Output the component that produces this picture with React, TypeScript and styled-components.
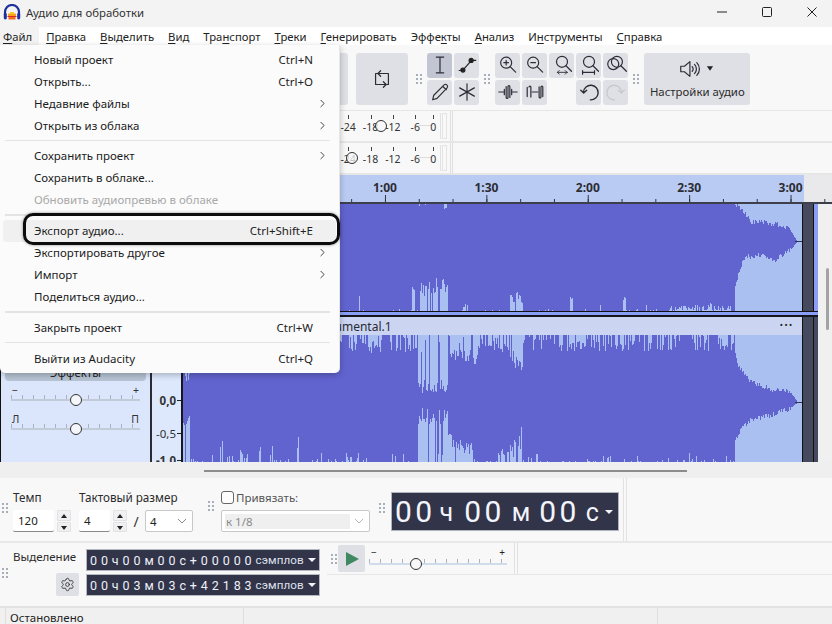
import React from "react";
import styled, { createGlobalStyle } from "styled-components";
import { ChevronRight, Settings } from "lucide-react";

const Global = createGlobalStyle`
  html, body { margin: 0; padding: 0; background: #f8f8f8; overflow: hidden; }
  #root { width: 832px; height: 624px; }
  * { box-sizing: border-box; }
`;

const FONT = `"Noto Sans", "Open Sans", "Liberation Sans", sans-serif`;

const Page = styled.div`
  position: relative; width: 832px; height: 624px; overflow: hidden;
  display: flex; flex-direction: column; font-family: ${FONT}; font-size: 11.5px; color: #1f1f1f;
  background: #f8f8f8;
`;

/* ---------- title + menu ---------- */
const TitleBar = styled.div`
  height: 27px; flex: none; display: flex; align-items: center; background: #f3f3f3; padding: 0 0 3px 3px;
`;
const TitleText = styled.span`
  margin-left: 5px; font-size: 11.4px; color: #333;
`;
const WinControls = styled.div`
  margin-left: auto; display: flex; align-items: center; padding-right: 14px; gap: 33px; height: 100%;
`;
const MenuBar = styled.div`
  height: 18px; flex: none; display: flex; background: #fff; align-items: flex-start;
`;
const MenuEntry = styled.span<{ $active?: boolean }>`
  padding: 1px 7px 0 ${(p) => (p.$active ? "3px" : "7px")};
  height: 18px; line-height: 18px; font-size: 11.3px; color: #222;
  background: ${(p) => (p.$active ? "#f3f3f3" : "transparent")};
  u { text-underline-offset: 2px; }
`;

/* ---------- toolbar ---------- */
const Toolbar = styled.div`
  height: 66px; flex: none; display: flex; align-items: center; padding: 2px 0 0 296px;
  background: #f8f8f8; border-bottom: 1px solid #e6e6e6;
`;
const Grip = styled.div<{ $ml?: number; $mr?: number }>`
  width: 8px; height: 12px; flex: none; margin: 0 ${(p) => p.$mr ?? 0}px 0 ${(p) => p.$ml ?? 0}px;
  background-image: radial-gradient(circle, #a9aebb 1px, transparent 1.3px);
  background-size: 4px 4px;
`;
const BigButton = styled.div`
  width: 52px; height: 52px; border-radius: 3px; background: #dfe0e5; flex: none;
  display: flex; align-items: center; justify-content: center;
`;
const SecondBigButton = styled(BigButton)`
  margin-left: 8px;
`;
const ToolGrid = styled.div<{ $cols: number }>`
  display: grid; grid-template-columns: repeat(${(p) => p.$cols}, 25.2px); grid-auto-rows: 25px; gap: 2px 1.8px;
`;
const ToolButton = styled.div<{ $active?: boolean; $none?: boolean }>`
  border-radius: 3px; display: flex; align-items: center; justify-content: center;
  background: ${(p) => (p.$none ? "transparent" : p.$active ? "#c2c5d2" : "#dfe0e5")};
`;
const AudioButton = styled.div`
  width: 106px; height: 52px; border-radius: 3px; background: #dfe0e5; flex: none;
  display: flex; flex-direction: column; align-items: center; padding-top: 5px;
`;
const AudioTop = styled.div`
  display: flex; align-items: center; gap: 5px; height: 22px; margin-left: -4px;
`;
const AudioCaption = styled.span`
  font-size: 11.4px; color: #2b2b2b; margin-top: 4px; white-space: nowrap;
`;

/* ---------- meters ---------- */
const MeterRow = styled.div`
  height: 32px; flex: none; display: flex; align-items: stretch; padding-left: 337px;
  border-bottom: 2px solid #e6e6e6; background: #f8f8f8;
`;
const MeterScale = styled.div`
  position: relative; display: flex; width: 104px; align-items: center;
  border-right: 1px solid #e2e2e2; margin: 2px 0;
  &::before { content: ""; position: absolute; left: 78px; right: 8px; top: 12px; border-top: 1px solid #dcdcdc; }
`;
const MeterLabel = styled.span<{ $w?: number }>`
  position: relative; width: ${(p) => p.$w ?? 23}px; text-align: center; font-size: 10.5px; color: #333; line-height: 14px;
  padding-top: 1px;
  &::before { content: ""; position: absolute; left: 50%; top: -4px; height: 4px; border-left: 1px solid #444; }
`;
const MeterHandle = styled.div<{ $left: number }>`
  position: absolute; top: 7px; left: ${(p) => p.$left}px; width: 12px; height: 12px; border-radius: 50%;
  border: 1.4px solid #333; background: rgba(248, 248, 248, 0.75);
`;
const MeterSide = styled.div`
  width: 5px; margin: 2px 3px 2px 1px; border: 1px solid #e4e4e4;
`;
const VLine = styled.div`
  width: 3px; border-left: 1px solid #dfdfdf; border-right: 1px solid #dfdfdf; flex: none;
`;

/* ---------- ruler ---------- */
const Ruler = styled.div`
  position: relative; height: 29px; flex: none; display: flex; align-items: flex-start; padding: 4px 0 0 334.3px;
  background: linear-gradient(to right, #b9cbf2 804px, #e9e9ec 804px);
  border-bottom: 2px solid #3d3f4c;
  &::after {
    content: ""; position: absolute; left: 0; right: 0; bottom: 0; height: 7px;
    background-image:
      linear-gradient(90deg, #30323c 1px, transparent 1px),
      linear-gradient(90deg, #30323c 1px, transparent 1px);
    background-repeat: repeat-x, repeat-x;
    background-size: 33.8px 3px, 101.4px 7px;
    background-position: 13.2px bottom, 80.8px bottom;
  }
`;
const RulerLabel = styled.span`
  width: 101.4px; text-align: center; font-size: 12px; font-weight: 700; color: #2c2c34; line-height: 18px; flex: none;
`;

/* ---------- tracks ---------- */
const TrackArea = styled.div`
  height: 258px; flex: none; display: flex; background: #f0f0f0;
`;
const TrackColumn = styled.div`
  width: 818px; flex: none; display: flex; flex-direction: column;
`;
const Gutter = styled.div`
  width: 14px; flex: none; padding: 64px 0 0 8px; background: #f0f0f0;
`;
const Thumb = styled.div`
  width: 3px; height: 62px; background: #a3a3a3; border-radius: 2px;
`;
const TrackRow = styled.div<{ $h: number }>`
  height: ${(p) => p.$h}px; flex: none; display: flex;
`;
const FirstTrackRow = styled(TrackRow)`
  border-bottom: 1px solid #111;
`;
const TrackSelect = styled.div`
  height: 3px; flex: none; background: #8a9ef5;
`;
const SecondTrackRow = styled(TrackRow)`
  border-top: 2px solid #15161c;
`;
const Panel = styled.div`
  width: 150px; flex: none; background: #dbe6fd; border-left: 1px solid #111;
  display: flex; flex-direction: column; justify-content: flex-end; padding: 0 4px 29px;
`;
const EffectsButton = styled.div`
  height: 22px; padding-top: 8px; background: #b7c4d4; border-radius: 0 0 4px 4px; text-align: center; font-size: 11.5px; line-height: 12px; color: #222;
  margin-bottom: 3px; flex: none;
`;
const SliderCaption = styled.div`
  display: flex; justify-content: space-between; padding: 0 7px; font-size: 10.5px; height: 13px; line-height: 13px; color: #333; margin-bottom: -5px;
`;
const Slider = styled.div<{ $track: string; $flat?: boolean }>`
  position: relative; height: 12px; margin: 0 ${(p) => (p.$flat ? 0 : 6)}px; flex: none;
  &::before {
    content: ""; position: absolute; left: 0; right: 0; top: 7px; height: 2px; background: ${(p) => p.$track};
  }
  &::after {
    content: ""; position: absolute; left: 0; right: 0; top: 3px; height: 4px;
    background: #aab2c0;
    mask-image: repeating-linear-gradient(90deg, #000 0 1px, transparent 1px 11px);
  }
`;
const SliderHandle = styled.div<{ $left: number; $fill: string }>`
  position: absolute; z-index: 1; top: 2px; left: ${(p) => p.$left}px; width: 12px; height: 12px; border-radius: 50%;
  border: 1.4px solid #333; background: ${(p) => p.$fill};
`;
const PanelGap = styled.div`
  height: 9.5px; flex: none;
`;
const VRuler = styled.div`
  width: 33px; flex: none; background: #dde8fd; border-left: 2px solid #2b2b33; border-right: 2px solid #17171c;
  padding-top: 34px; overflow: hidden; display: flex; flex-direction: column;
`;
const VLabel = styled.div<{ $strong?: boolean; $h?: number }>`
  height: ${(p) => p.$h ?? 33}px; flex: none; display: flex; align-items: center; justify-content: flex-end;
  font-size: 11.5px; font-weight: ${(p) => (p.$strong ? 700 : 400)}; color: #333;
  &::after { content: ""; width: 4px; height: 1px; background: #222; margin-left: 1px; flex: none; }
`;
const WaveColumn = styled.div`
  width: 619px; flex: none; display: flex; flex-direction: column; min-height: 0;
`;
const TrackHeader = styled.div`
  height: 18px; flex: none; background: #cbd5f2; display: flex; align-items: center; padding-left: 125px; font-size: 12px; color: #2a2a33;
`;
const TrackDots = styled.span`
  margin-left: auto; margin-right: 8px; font-size: 7px; font-weight: 700; letter-spacing: 2px; line-height: 10px; color: #222;
`;
const WaveSvg = styled.svg`
  display: block; flex: none;
`;
const EndCap = styled.div<{ $blue?: boolean }>`
  width: 16px; flex: none; display: flex; background: #454a5f;
  border-left: 1px solid #111;
  &::after {
    content: ""; margin-left: 10px; width: 5px; border-left: 1px solid #111;
    background: ${(p) => (p.$blue ? "#8a9ef5" : "#454a5f")};
  }
`;

/* ---------- lower bars ---------- */
const HScroll = styled.div`
  height: 16px; flex: none; background: #efefef; padding: 8px 0 0 204px;
`;
const HThumb = styled.div`
  width: 483px; height: 2px; background: #8c8c8c;
`;
const BarA = styled.div`
  height: 65px; flex: none; display: flex; align-items: flex-start; background: #f8f8f8; border-bottom: 2px solid #e8e8e8;
  padding-left: 1px;
`;
const GripWrap = styled.div<{ $top: number; $mr: number }>`
  padding-top: ${(p) => p.$top}px; margin-right: ${(p) => p.$mr}px; flex: none; display: flex;
`;
const Field = styled.div<{ $w: number; $ml?: number }>`
  width: ${(p) => p.$w}px; flex: none; padding: 10px 0 0 ${(p) => p.$ml ?? 0}px;
`;
const FieldLabel = styled.div`
  height: 18px; line-height: 18px; font-size: 11.7px; color: #2a2a2a; white-space: nowrap; margin-bottom: 4px;
`;
const ControlRow = styled.div`
  display: flex; align-items: center; gap: 3px; height: 22px;
`;
const NumInput = styled.div<{ $w: number }>`
  width: ${(p) => p.$w}px; height: 22px; background: #fff; border-bottom: 1px solid #8a8a8a; border-radius: 2px; flex: none;
  font-size: 11.5px; line-height: 21px; padding-left: 5px; color: #222;
`;
const Spin = styled.div`
  width: 14px; height: 22px; flex: none; display: flex; flex-direction: column; gap: 1px;
`;
const SpinPart = styled.div<{ $down?: boolean }>`
  flex: 1; background: #f0f0f2; border: 1px solid #e2e2e2; border-radius: 1px; position: relative;
  &::after {
    content: ""; position: absolute; left: 3px; top: 3px; border-left: 3px solid transparent; border-right: 3px solid transparent;
    ${(p) => (p.$down ? "border-top: 4px solid #222;" : "border-bottom: 4px solid #222;")}
  }
`;
const Slash = styled.span`
  width: 12px; text-align: center; font-size: 14px; flex: none; color: #333;
`;
const Select = styled.div<{ $w: number; $disabled?: boolean }>`
  width: ${(p) => p.$w}px; height: 22px; background: #fff; border: 1px solid #c8c8c8; border-radius: 2px; flex: none;
  display: flex; align-items: center; justify-content: space-between; padding: 0 5px 0 3px; font-size: 11.5px;
  color: ${(p) => (p.$disabled ? "#8a8a8a" : "#222")};
`;
const SelectInner = styled.div<{ $w?: number; $disabled?: boolean }>`
  width: ${(p) => p.$w ?? 24}px; height: 15px; line-height: 15px; padding-left: 1px;
  background: ${(p) => (p.$disabled ? "#efefef" : "transparent")};
`;
const SnapTop = styled.div`
  display: flex; align-items: center; height: 18px; gap: 2px; margin-bottom: 4px; font-size: 11.5px; color: #555;
`;
const Checkbox = styled.div`
  width: 13px; height: 13px; border: 1px solid #666; border-radius: 3px; background: #fdfdfd; flex: none;
`;
const BigClock = styled.div`
  width: 228px; height: 39px; margin-top: 14px; flex: none; background: #32344a; border: 1.5px solid #b0b4bc;
  color: #f2f5fc; font-family: Roboto, "Liberation Sans", sans-serif; font-size: 30px; line-height: 35px;
  display: flex; align-items: center; padding-left: 3px; letter-spacing: 3.4px; white-space: nowrap;
`;
const ClockUnit = styled.span<{ $ml: number; $mr: number }>`
  margin: 2px ${(p) => p.$mr}px 0 ${(p) => p.$ml}px; letter-spacing: 0; font-size: 25px; flex: none;
`;
const Caret = styled.span<{ $size: number; $mr?: number }>`
  flex: none; width: 0; height: 0; border-left: ${(p) => p.$size}px solid transparent; border-right: ${(p) => p.$size}px solid transparent;
  border-top: ${(p) => p.$size}px solid #f4f4f8; margin: 0 ${(p) => p.$mr ?? 0}px 0 auto;
`;
const BarEndLines = styled.div`
  margin-left: 4px; align-self: stretch; width: 4px; border-left: 1px solid #e2e2e2; border-right: 1px solid #e2e2e2; flex: none;
`;
const BarB = styled.div`
  height: 63px; flex: none; display: flex; background: #f8f8f8;
`;
const SelBlock = styled.div`
  width: 327px; flex: none; display: flex; padding-left: 1px;
`;
const SelLabels = styled.div`
  width: 77px; padding-left: 4px; flex: none; display: flex; flex-direction: column; align-items: flex-start;
`;
const SelCaption = styled.div`
  margin-top: 5px; font-size: 11.5px; line-height: 17px; color: #2a2a2a; white-space: nowrap;
`;
const GearButton = styled.div`
  margin: 8px 0 0 43px; width: 23px; height: 23px; background: #dfe0e5; border-radius: 2px; display: flex; align-items: center; justify-content: center; flex: none;
`;
const SelDisplays = styled.div`
  display: flex; flex-direction: column; gap: 3px; padding-top: 6px;
`;
const SmallClock = styled.div`
  width: 234px; height: 22px; background: #32344a; border: 1.5px solid #b6b9c0; color: #eef1f8; flex: none;
  font-family: Roboto, "Liberation Sans", sans-serif; font-size: 12.5px; letter-spacing: 3.9px; line-height: 19px;
  display: flex; align-items: center; padding: 0 3px 0 3px; white-space: nowrap;
`;
const SmallUnit = styled.span`
  letter-spacing: 0.1px; color: #dfe2ea; font-size: 11.6px;
`;
const PlayBlock = styled.div`
  flex: 1; display: flex; flex-direction: column;
`;
const PlayRow = styled.div`
  height: 32px; flex: none; display: flex; align-items: center; border-bottom: 1px solid #e6e6e6;
`;
const PlayButton = styled.div`
  width: 27px; height: 27px; margin-left: -1px; background: #dfe0e5; border-radius: 2px; display: flex; align-items: center; justify-content: center; flex: none;
`;
const SpeedWrap = styled.div`
  width: 138px; margin: -3px 0 0 4px; flex: none; display: flex; flex-direction: column;
`;
const SpeedCaption = styled.div`
  display: flex; justify-content: space-between; padding: 0 2px; font-size: 10px; height: 10px; line-height: 13px; color: #222;
`;
const PlayLines = styled.div`
  margin-left: 7px; align-self: stretch; width: 4px; border-left: 1px solid #e2e2e2; border-right: 1px solid #e2e2e2;
`;
const Status = styled.div`
  height: 18px; flex: none; background: #f0f0f0; border-top: 2px solid #e2e2e2; display: flex; font-size: 11.5px; color: #222;
  padding-left: 5px;
`;
const StatusCell = styled.div<{ $w: number }>`
  width: ${(p) => p.$w}px; flex: none; border-left: 1px solid #dedede; padding-left: 4px; line-height: 20px; white-space: nowrap;
`;

/* ---------- dropdown menu ---------- */
const Menu = styled.div`
  position: absolute; left: 0; top: 45px; width: 340px; height: 328px; background: #fbfbfb; border-radius: 0 0 5px 5px;
  box-shadow: 0 2px 6px rgba(0, 0, 0, 0.25); padding-top: 3px; z-index: 5; border-right: 1px solid #e6e6e6;
`;
const MenuRow = styled.div<{ $hover?: boolean; $disabled?: boolean }>`
  position: relative; height: 22px; margin: 0 3px; padding: 0 23px 0 31px; display: flex; align-items: center; justify-content: space-between;
  font-size: 11.5px; border-radius: 3px; color: ${(p) => (p.$disabled ? "#a8a8a8" : "#1c1c1c")};
  background: ${(p) => (p.$hover ? "#f0f0f0" : "transparent")};
`;
const MenuChevron = styled(ChevronRight)`
  margin-right: -16px; color: #444;
`;
const Shortcut = styled.span`
  font-size: 11.5px; color: #222;
`;
const MenuSep = styled.div`
  height: 1.5px; background: #e4e4e4; margin: 3.6px 9px 3.7px 5px;
`;
const Callout = styled.div`
  position: absolute; left: 20px; right: -4px; top: -7px; bottom: -3px; border: 3px solid #0c0c0c; border-radius: 10px;
  box-shadow: 0 0 3px rgba(0, 0, 0, 0.45); pointer-events: none;
`;

/* ---------- drawings ---------- */
const stroke = { fill: "none", stroke: "#2c2c36", strokeWidth: 1.3, strokeLinecap: "round" as const, strokeLinejoin: "round" as const };

const Logo = () => (
  <svg width="18" height="17" viewBox="0 0 18 17">
    <path d="M2 11V8a7 7 0 0 1 14 0v3" fill="none" stroke="#1b2f9e" strokeWidth="2.2" />
    <rect x="0.8" y="9" width="3" height="6.5" rx="1.4" fill="#1b2f9e" />
    <rect x="14.2" y="9" width="3" height="6.5" rx="1.4" fill="#1b2f9e" />
    <path d="M5 9.5h8V12H5z" fill="#f7a21b" />
    <path d="M4.5 12h9v1h-9z" fill="#d8262c" />
    <path d="M5.5 13h7v2.5h-7z" fill="#f26b1d" />
    <path d="M7 8h4v2H7z" fill="#fbc52d" />
  </svg>
);
const Mag = ({ children, cx = 10, cy = 9.5, r = 6 }: { children?: React.ReactNode; cx?: number; cy?: number; r?: number }) => (
  <svg width="22" height="22" viewBox="0 0 24 24" {...stroke}>
    <circle cx={cx} cy={cy} r={r} />
    <path d={`M${cx + r * 0.72} ${cy + r * 0.72}L${cx + r * 0.72 + 6} ${cy + r * 0.72 + 6}`} />
    {children}
  </svg>
);

const mulberry = (seed: number) => () => {
  seed |= 0; seed = (seed + 0x6d2b79f5) | 0;
  let t = Math.imul(seed ^ (seed >>> 15), 1 | seed);
  t = (t + Math.imul(t ^ (t >>> 7), 61 | t)) ^ t;
  return ((t ^ (t >>> 14)) >>> 0) / 4294967296;
};
type Env = [number, number][];
const interp = (e: Env, x: number) => {
  for (let i = 0; i < e.length - 1; i++) {
    if (x >= e[i][0] && x <= e[i + 1][0]) {
      const t = (x - e[i][0]) / (e[i + 1][0] - e[i][0]);
      return e[i][1] + (e[i + 1][1] - e[i][1]) * t;
    }
  }
  return e[e.length - 1][1];
};
type Spike = [number, number, number, number];
const pick = (sp: Spike[], x: number, r: () => number) => {
  let h = 0;
  for (const [a, b, lo, hi] of sp) {
    if (x >= a && x <= b && r() > 0.18) h = Math.max(h, lo + (hi - lo) * r());
  }
  return h;
};
const buildWave = (
  seed: number, height: number,
  topSp: Spike[], botSp: Spike[], topBase: number, botBase: number, topProb: number, botProb: number,
  topEnv: Env, botEnv: Env,
) => {
  const r = mulberry(seed);
  let d = "";
  for (let px = 183; px < 797; px++) {
    let top: number, bot: number;
    if (px < 735) {
      top = pick(topSp, px, r);
      if (r() < topProb) top = Math.max(top, r() * topBase);
      bot = pick(botSp, px, r);
      if (r() < botProb) bot = Math.max(bot, r() * r() * botBase);
      top = Math.round(top); bot = height - Math.round(bot);
    } else {
      top = Math.round(interp(topEnv, px) + (r() - 0.5) * 5);
      bot = Math.round(interp(botEnv, px) + (r() - 0.5) * 5);
      if (px > 790) { top = Math.round(interp(topEnv, px)); bot = Math.round(interp(botEnv, px)); }
    }
    d += `M${px - 183 + 0.5} ${top}V${bot}`;
  }
  return d;
};

const wave1 = buildWave(
  11, 107,
  [[419, 421, 0, 3], [425, 426, 0, 2], [444, 446, 2, 5]],
  [[359, 359, 14, 16], [412, 414, 20, 25], [420, 445, 15, 33], [445, 447, 22, 35], [463, 468, 3, 9], [510, 513, 5, 18], [514, 522, 5, 21], [570, 572, 8, 14], [623, 625, 10, 17], [645, 646, 6, 10], [600, 600, 4, 6], [670, 730, 0, 6], [710, 711, 6, 10], [728, 731, 3, 7]],
  0, 3, 0, 0.2,
  [[735, 0], [745, 9], [750, 18], [760, 18], [780, 21], [790, 26], [796, 36], [800, 37]],
  [[735, 83], [738, 71], [745, 51], [750, 53], [760, 51], [775, 56], [790, 46], [796, 39], [800, 38]],
);
const wave2 = buildWave(
  23, 127,
  [[183, 189, 36, 46], [418, 422, 44, 60], [422, 447, 45, 58], [430, 445, 44, 58], [450, 470, 14, 27], [472, 477, 18, 30], [500, 506, 8, 18], [510, 517, 15, 30], [515, 522, 25, 44], [368, 375, 5, 18], [570, 585, 6, 16]],
  [[183, 189, 36, 46], [418, 447, 35, 54], [445, 452, 18, 30], [452, 472, 7, 22], [498, 504, 6, 20], [506, 512, 8, 18], [512, 522, 12, 37], [536, 537, 4, 9], [608, 610, 3, 7], [358, 359, 8, 15], [350, 351, 4, 7], [220, 222, 8, 25], [258, 260, 8, 24], [296, 298, 10, 26], [270, 272, 6, 20], [320, 322, 6, 24], [240, 242, 5, 14]],
  17, 10, 0.48, 0.22,
  [[735, 20], [738, 30], [745, 40], [750, 47], [770, 54], [790, 57], [796, 65], [800, 67]],
  [[735, 105], [740, 95], [750, 85], [770, 80], [790, 73], [797, 68], [800, 68]],
);

const Wave = ({ h, d, center }: { h: number; d: string; center: number }) => (
  <WaveSvg width="619" height={h} viewBox={`0 0 619 ${h}`} shapeRendering="crispEdges">
    <rect width="619" height={h} fill="#a9c0f0" />
    <path d={d} stroke="#6163cf" strokeWidth="1" fill="none" />
    <rect x="612" y={center} width="7" height="1" fill="#33344a" />
  </WaveSvg>
);

const menuItems: [string, string, string][] = [
  ["", "Ф", "айл"], ["", "П", "равка"], ["", "В", "ыделить"], ["", "В", "ид"],
  ["Тра", "н", "спорт"], ["", "Т", "реки"], ["", "Г", "енерировать"], ["Эффе", "к", "ты"],
  ["", "А", "нализ"], ["И", "н", "струменты"], ["", "С", "правка"],
];

const Row = ({ label, sc, sub, disabled }: { label: string; sc?: string; sub?: boolean; disabled?: boolean }) => (
  <MenuRow $disabled={disabled}>
    <span>{label}</span>
    {sc && <Shortcut>{sc}</Shortcut>}
    {sub && <MenuChevron size={13} strokeWidth={1.8} />}
  </MenuRow>
);

const Meter = ({ handle }: { handle: number }) => (
  <MeterRow>
    <MeterScale>
      <MeterLabel>-24</MeterLabel>
      <MeterLabel>-18</MeterLabel>
      <MeterLabel>-12</MeterLabel>
      <MeterLabel>-6</MeterLabel>
      <MeterLabel $w={14}>0</MeterLabel>
      <MeterHandle $left={handle} />
    </MeterScale>
    <MeterSide />
    <VLine />
  </MeterRow>
);

export default function App() {
  return (
    <Page>
      <Global />
      <TitleBar>
        <Logo />
        <TitleText>Аудио для обработки</TitleText>
        <WinControls>
          <svg width="12" height="12" viewBox="0 0 12 12"><path d="M1 6h10" stroke="#222" strokeWidth="1" /></svg>
          <svg width="12" height="12" viewBox="0 0 12 12"><rect x="1.5" y="1.5" width="9" height="9" rx="1" fill="none" stroke="#222" strokeWidth="1" /></svg>
          <svg width="12" height="12" viewBox="0 0 12 12"><path d="M1.5 1.5l9 9M10.5 1.5l-9 9" stroke="#222" strokeWidth="1" /></svg>
        </WinControls>
      </TitleBar>
      <MenuBar>
        {menuItems.map(([a, b, c], i) => (
          <MenuEntry key={i} $active={i === 0}>{a}<u>{b}</u>{c}</MenuEntry>
        ))}
      </MenuBar>

      <Toolbar>
        <BigButton />
        <SecondBigButton>
          <svg width="22" height="22" viewBox="0 0 24 24" {...stroke}>
            <path d="M8 6h11v12h-4M16 18H5V6h2M10.5 3L7.5 6l3 3M13.5 15l3 3-3 3" />
          </svg>
        </SecondBigButton>
        <Grip $ml={7} $mr={4} />
        <ToolGrid $cols={2}>
          <ToolButton $active>
            <svg width="22" height="22" viewBox="0 0 24 24" {...stroke}><path d="M8 3.5h8M8 20.5h8M12 3.5v17" /></svg>
          </ToolButton>
          <ToolButton>
            <svg width="22" height="22" viewBox="0 0 24 24" fill="#222" stroke="#222" strokeWidth="1.3"><path d="M3 18h4M8 17l8-9M17 7h5" fill="none" /><circle cx="7.5" cy="17.5" r="2.2" /><circle cx="16.5" cy="7" r="2.2" /></svg>
          </ToolButton>
          <ToolButton>
            <svg width="22" height="22" viewBox="0 0 24 24" {...stroke}><path d="M4 20.5l1.2-5L16.5 4.2a2 2 0 0 1 3 0 2.4 2.4 0 0 1 .2 3.2L8.8 19z M4 20.5l4.8-1.5M15 6l4 3.5" /></svg>
          </ToolButton>
          <ToolButton>
            <svg width="22" height="22" viewBox="0 0 24 24" {...stroke}><path d="M12 3v18M4 7.5l16 9M20 7.5l-16 9" /></svg>
          </ToolButton>
        </ToolGrid>
        <Grip $ml={4} $mr={4} />
        <ToolGrid $cols={5}>
          <ToolButton><Mag><path d="M7.5 9.5h5M10 7v5" /></Mag></ToolButton>
          <ToolButton><Mag><path d="M7.5 9.5h5" /></Mag></ToolButton>
          <ToolButton><Mag cx={12} cy={8.5}><path d="M7 20h11M9 18l-2 2 2 2M15.5 18l2 2-2 2" strokeWidth="1" /></Mag></ToolButton>
          <ToolButton><Mag cx={12} cy={8.5}><path d="M5 20h13M5 18v4M18 18v4" /></Mag></ToolButton>
          <ToolButton><Mag cx={13} cy={8.5}><circle cx="9" cy="11" r="6" /></Mag></ToolButton>
          <ToolButton>
            <svg width="22" height="22" viewBox="0 0 24 24" {...stroke}><path d="M2 12h5M17 12h5M8 9v6M10 6v12a1 1 0 0 0 2 0V6a1 1 0 0 1 2 0v12M16 9v6" /></svg>
          </ToolButton>
          <ToolButton>
            <svg width="22" height="22" viewBox="0 0 24 24" {...stroke}><path d="M9 12h6M3.5 7v10M5.5 6.5a1 1 0 0 1 2 0v11M16.5 6.5v11a1 1 0 0 0 2 0v-11a1 1 0 0 1 2 0V17" /></svg>
          </ToolButton>
          <ToolButton $none />
          <ToolButton>
            <svg width="22" height="22" viewBox="0 0 24 24" {...stroke} strokeWidth={1.5}><path d="M6 12a8 8 0 1 1 7.5 8.6M3 10l3.2 3.2L9.5 10" /></svg>
          </ToolButton>
          <ToolButton>
            <svg width="22" height="22" viewBox="0 0 24 24" {...stroke} stroke="#c8c9cf" strokeWidth={1.5}><path d="M18 12a8 8 0 1 0-7.5 8.6M21 10l-3.2 3.2L14.5 10" /></svg>
          </ToolButton>
        </ToolGrid>
        <Grip $ml={4} $mr={4} />
        <AudioButton>
          <AudioTop>
            <svg width="24" height="22" viewBox="0 0 24 24" {...stroke}>
              <path d="M3 9h4l6-5v16l-6-5H3z" />
              <path d="M15.5 9.5a3.5 3.5 0 0 1 0 5M18 7a7 7 0 0 1 0 10M20.5 5a10 10 0 0 1 0 14" />
            </svg>
            <svg width="8" height="6" viewBox="0 0 9 6"><path d="M1 0h7L4.5 5z" fill="#222" /></svg>
          </AudioTop>
          <AudioCaption>Настройки аудио</AudioCaption>
        </AudioButton>
      </Toolbar>

      <Meter handle={38} />
      <Meter handle={9} />

      <Ruler>
        <RulerLabel>1:00</RulerLabel>
        <RulerLabel>1:30</RulerLabel>
        <RulerLabel>2:00</RulerLabel>
        <RulerLabel>2:30</RulerLabel>
        <RulerLabel>3:00</RulerLabel>
      </Ruler>

      <TrackArea>
        <TrackColumn>
          <FirstTrackRow $h={108}>
            <Panel />
            <VRuler />
            <WaveColumn><Wave h={107} d={wave1} center={37} /></WaveColumn>
            <EndCap $blue />
          </FirstTrackRow>
          <TrackSelect />
          <SecondTrackRow $h={147}>
            <Panel>
              <EffectsButton>Эффекты</EffectsButton>
              <SliderCaption><span>−</span><span>+</span></SliderCaption>
              <Slider $track="#c2cbd8"><SliderHandle $left={59} $fill="#f4f6fa" /></Slider>
              <PanelGap />
              <SliderCaption><span>Л</span><span>П</span></SliderCaption>
              <Slider $track="#c2cbd8"><SliderHandle $left={59} $fill="#f4f6fa" /></Slider>
            </Panel>
            <VRuler>
              <VLabel>0,5</VLabel>
              <VLabel $strong>0,0</VLabel>
              <VLabel>-0,5</VLabel>
              <VLabel $strong $h={20}>-1,0</VLabel>
            </VRuler>
            <WaveColumn>
              <TrackHeader>
                Instrumental.1
                <TrackDots>•••</TrackDots>
              </TrackHeader>
              <Wave h={127} d={wave2} center={67} />
            </WaveColumn>
            <EndCap />
          </SecondTrackRow>
        </TrackColumn>
        <Gutter><Thumb /></Gutter>
      </TrackArea>

      <HScroll><HThumb /></HScroll>

      <BarA>
        <GripWrap $top={24} $mr={1}><Grip /></GripWrap>
        <Field $w={69} $ml={3}>
          <FieldLabel>Темп</FieldLabel>
          <ControlRow>
            <NumInput $w={41}>120</NumInput>
            <Spin><SpinPart /><SpinPart $down /></Spin>
          </ControlRow>
        </Field>
        <Field $w={122}>
          <FieldLabel>Тактовый размер</FieldLabel>
          <ControlRow>
            <NumInput $w={31}>4</NumInput>
            <Spin><SpinPart /><SpinPart $down /></Spin>
            <Slash>/</Slash>
            <Select $w={48}>
              <SelectInner>4</SelectInner>
              <svg width="10" height="6" viewBox="0 0 10 6"><path d="M1 1l4 4 4-4" fill="none" stroke="#888" /></svg>
            </Select>
          </ControlRow>
        </Field>
        <GripWrap $top={22} $mr={6}><Grip $ml={6} /></GripWrap>
        <Field $w={150}>
          <SnapTop><Checkbox />Привязать:</SnapTop>
          <Select $w={149} $disabled>
            <SelectInner $w={125} $disabled>к 1/8</SelectInner>
            <svg width="10" height="6" viewBox="0 0 10 6"><path d="M1 1l4 4 4-4" fill="none" stroke="#bbb" /></svg>
          </Select>
        </Field>
        <GripWrap $top={24} $mr={5}><Grip $ml={7} /></GripWrap>
        <BigClock>
          00<ClockUnit $ml={4} $mr={11}>ч</ClockUnit>00<ClockUnit $ml={7} $mr={9}>м</ClockUnit>00<ClockUnit $ml={6} $mr={0}>с</ClockUnit>
          <Caret $size={4} $mr={5} />
        </BigClock>
        <BarEndLines />
      </BarA>

      <BarB>
        <SelBlock>
          <GripWrap $top={24} $mr={0}><Grip /></GripWrap>
          <SelLabels>
            <SelCaption>Выделение</SelCaption>
            <GearButton><Settings size={15} strokeWidth={1.4} color="#333" /></GearButton>
          </SelLabels>
          <SelDisplays>
            <SmallClock>00ч00м00с+00000<SmallUnit>сэмплов</SmallUnit><Caret $size={4} /></SmallClock>
            <SmallClock>00ч03м03с+42183<SmallUnit>сэмплов</SmallUnit><Caret $size={4} /></SmallClock>
          </SelDisplays>
        </SelBlock>
        <PlayBlock>
          <PlayRow>
            <Grip $ml={3} $mr={1} />
            <PlayButton>
              <svg width="18" height="18" viewBox="0 0 18 18"><path d="M3 2l13 7-13 7z" fill="#3f8a63" /></svg>
            </PlayButton>
            <SpeedWrap>
              <SpeedCaption><span>−</span><span>+</span></SpeedCaption>
              <Slider $track="#cfdcec" $flat><SliderHandle $left={41} $fill="#f8f8f8" /></Slider>
            </SpeedWrap>
            <PlayLines />
          </PlayRow>
        </PlayBlock>
      </BarB>

      <Status>
        <StatusCell $w={238}>Остановлено</StatusCell>
        <StatusCell $w={414} />
        <StatusCell $w={170} />
      </Status>

      <Menu>
        <Row label="Новый проект" sc="Ctrl+N" />
        <Row label="Открыть..." sc="Ctrl+O" />
        <Row label="Недавние файлы" sub />
        <Row label="Открыть из облака" sub />
        <MenuSep />
        <Row label="Сохранить проект" sub />
        <Row label="Сохранить в облаке..." />
        <Row label="Обновить аудиопревью в облаке" disabled />
        <MenuSep />
        <MenuRow $hover>
          <span>Экспорт аудио...</span>
          <Shortcut>Ctrl+Shift+E</Shortcut>
          <Callout />
        </MenuRow>
        <Row label="Экспортировать другое" sub />
        <Row label="Импорт" sub />
        <Row label="Поделиться аудио..." />
        <MenuSep />
        <Row label="Закрыть проект" sc="Ctrl+W" />
        <MenuSep />
        <Row label="Выйти из Audacity" sc="Ctrl+Q" />
      </Menu>
    </Page>
  );
}
